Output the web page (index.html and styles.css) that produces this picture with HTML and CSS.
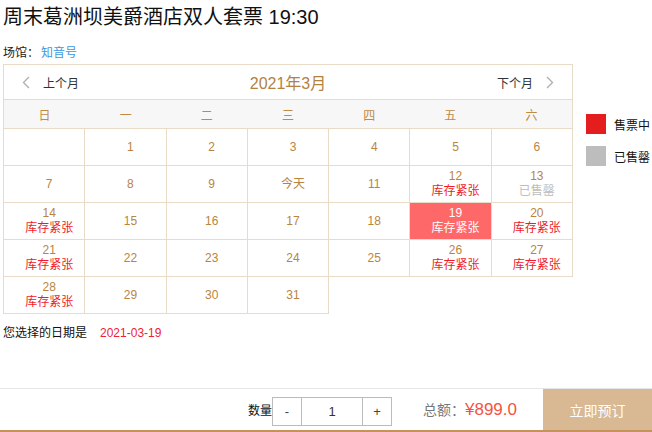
FILE: index.html
```html
<!DOCTYPE html>
<html lang="zh-CN">
<head>
<meta charset="utf-8">
<title>周末葛洲坝美爵酒店双人套票</title>
<link rel="stylesheet" href="styles.css">
</head>
<body>
<div class="page">
  <div class="main">
    <h1 class="title">周末葛洲坝美爵酒店双人套票 19:30</h1>
    <div class="venue">场馆：<a class="venue-link">知音号</a></div>
    <div class="cal-row">
      <div class="calendar">
        <div class="cal-head">
          <div class="nav prev">
            <svg class="chev" width="8" height="13" viewBox="0 0 8 13"><polyline points="7,1 1.5,6.5 7,12" fill="none" stroke="#b0b0b0" stroke-width="1.4"/></svg>
            <span>上个月</span>
          </div>
          <div class="month">2021年3月</div>
          <div class="nav next">
            <span>下个月</span>
            <svg class="chev" width="8" height="13" viewBox="0 0 8 13"><polyline points="1,1 6.5,6.5 1,12" fill="none" stroke="#b0b0b0" stroke-width="1.4"/></svg>
          </div>
        </div>
        <div class="weekdays">
          <span>日</span><span>一</span><span>二</span><span>三</span><span>四</span><span>五</span><span>六</span>
        </div>
        <table class="days">
          <tr>
            <td></td>
            <td><span class="num">1</span></td>
            <td><span class="num">2</span></td>
            <td><span class="num">3</span></td>
            <td><span class="num">4</span></td>
            <td><span class="num">5</span></td>
            <td><span class="num">6</span></td>
          </tr>
          <tr>
            <td><span class="num">7</span></td>
            <td><span class="num">8</span></td>
            <td><span class="num">9</span></td>
            <td><span class="num">今天</span></td>
            <td><span class="num">11</span></td>
            <td><span class="num">12</span><span class="tag hot">库存紧张</span></td>
            <td><span class="num">13</span><span class="tag sold">已售罄</span></td>
          </tr>
          <tr>
            <td><span class="num">14</span><span class="tag hot">库存紧张</span></td>
            <td><span class="num">15</span></td>
            <td><span class="num">16</span></td>
            <td><span class="num">17</span></td>
            <td><span class="num">18</span></td>
            <td class="selected"><span class="num">19</span><span class="tag">库存紧张</span></td>
            <td><span class="num">20</span><span class="tag hot">库存紧张</span></td>
          </tr>
          <tr>
            <td><span class="num">21</span><span class="tag hot">库存紧张</span></td>
            <td><span class="num">22</span></td>
            <td><span class="num">23</span></td>
            <td><span class="num">24</span></td>
            <td><span class="num">25</span></td>
            <td><span class="num">26</span><span class="tag hot">库存紧张</span></td>
            <td><span class="num">27</span><span class="tag hot">库存紧张</span></td>
          </tr>
          <tr>
            <td><span class="num">28</span><span class="tag hot">库存紧张</span></td>
            <td><span class="num">29</span></td>
            <td><span class="num">30</span></td>
            <td><span class="num">31</span></td>
          </tr>
        </table>
      </div>
      <div class="legend">
        <div class="legend-item"><span class="swatch on"></span>售票中</div>
        <div class="legend-item"><span class="swatch off"></span>已售罄</div>
      </div>
    </div>
    <div class="picked">您选择的日期是<span class="picked-date">2021-03-19</span></div>
  </div>
  <div class="footer">
    <span class="qty-label">数量</span>
    <div class="qty">
      <span class="qty-btn">-</span>
      <span class="qty-val">1</span>
      <span class="qty-btn">+</span>
    </div>
    <div class="total">总额：<span class="price">¥899.0</span></div>
    <div class="buy">立即预订</div>
  </div>
</div>
</body>
</html>
```
FILE: styles.css
```css
html, body {
  margin: 0;
  padding: 0;
  background: #fff;
}
body {
  font-family: "Liberation Sans", "Noto Sans CJK SC", sans-serif;
  font-size: 12px;
  color: #000;
}
.page {
  height: 432px;
  display: flex;
  flex-direction: column;
  overflow: hidden;
}
.main {
  padding-left: 3px;
}
.title {
  margin: 0;
  padding-top: 2px;
  font-size: 20px;
  font-weight: normal;
  line-height: 30px;
  color: #111;
}
.venue {
  margin-top: 11px;
  line-height: 20px;
  margin-bottom: 1px;
  color: #222;
}
.venue-link {
  margin-left: 2px;
  color: #3a98e0;
}
.cal-row {
  display: flex;
  align-items: flex-start;
}
.calendar {
  width: 570px;
}
.cal-head {
  height: 34px;
  border: 1px solid #e8dbc8;
  display: flex;
  align-items: center;
  justify-content: space-between;
  padding: 0 18px;
}
.nav {
  display: flex;
  align-items: center;
  gap: 13px;
  color: #333;
  width: 110px;
}
.nav.next {
  justify-content: flex-end;
}
.chev {
  display: block;
}
.month {
  font-size: 16px;
  color: #b5813f;
}
.weekdays {
  height: 28px;
  background: #f7f7f7;
  border-left: 1px solid #e8dbc8;
  border-right: 1px solid #e8dbc8;
  display: grid;
  grid-template-columns: repeat(7, 1fr);
  align-items: center;
  text-align: center;
  color: #c08a45;
}
.days {
  width: 570px;
  border-collapse: collapse;
  table-layout: fixed;
}
.days td {
  border: 1px solid #e8dbc8;
  height: 36px;
  padding: 0 0 0 10px;
  text-align: center;
  vertical-align: middle;
  line-height: 15px;
}
.num {
  display: block;
  color: #b9843f;
}
.tag {
  display: block;
}
.tag.hot {
  color: #f01a2a;
}
.tag.sold {
  color: #bdbdbd;
}
.days td.selected {
  background: #ff6868;
}
.days td.selected .num,
.days td.selected .tag {
  color: #fff;
}
.legend {
  margin-left: 13px;
  padding-top: 50px;
  display: flex;
  flex-direction: column;
  gap: 12px;
}
.legend-item {
  display: flex;
  align-items: center;
  gap: 8px;
  color: #111;
}
.swatch {
  width: 20px;
  height: 20px;
  display: block;
}
.swatch.on {
  background: #e41e1e;
}
.swatch.off {
  background: #bdbdbd;
}
.picked {
  margin-top: 10px;
  line-height: 18px;
  color: #111;
}
.picked-date {
  margin-left: 13px;
  color: #ee2233;
}
.footer {
  margin-top: auto;
  height: 41px;
  border-top: 1px solid #e6e6e6;
  border-bottom: 2px solid #c4925a;
  display: flex;
  justify-content: flex-end;
  align-items: center;
}
.qty-label {
  color: #111;
}
.qty {
  display: flex;
  height: 27px;
  border: 1px solid #bbb;
  margin-top: 3px;
}
.qty-btn {
  width: 28px;
  display: flex;
  align-items: center;
  justify-content: center;
  color: #444;
  font-size: 13px;
}
.qty-val {
  width: 60px;
  border-left: 1px solid #bbb;
  border-right: 1px solid #bbb;
  display: flex;
  align-items: center;
  justify-content: center;
  color: #333;
  font-size: 13px;
}
.total {
  margin-left: 31px;
  color: #777;
  font-size: 14px;
  display: flex;
  align-items: baseline;
}
.price {
  font-size: 17px;
  color: #f4533f;
}
.buy {
  margin-left: 26px;
  width: 109px;
  align-self: stretch;
  background: #d8b993;
  color: #fff;
  font-size: 14px;
  display: flex;
  align-items: center;
  justify-content: center;
}
```
